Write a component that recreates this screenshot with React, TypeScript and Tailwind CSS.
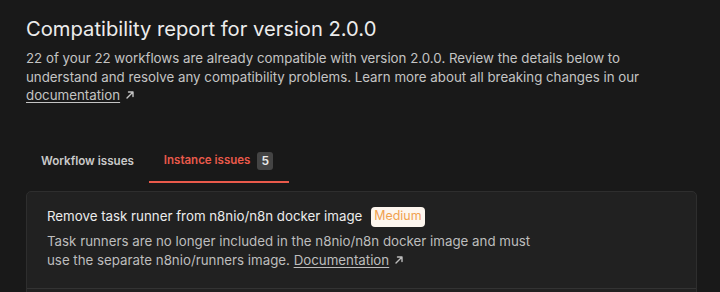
import React from 'react'

const ArrowUpRight = () => (
  <svg width="10" height="10" viewBox="0 0 10 10" fill="none" className="inline-block ml-[5px] align-[0px]">
    <path d="M2 8L8 2M3.5 2H8V6.5" stroke="currentColor" strokeWidth="1.4" strokeLinecap="round" strokeLinejoin="round" />
  </svg>
)

const App = () => {
  return (
    <div className="w-[720px] h-[292px] overflow-hidden bg-[#191919] font-['Inter',sans-serif]">
      <div className="pl-[26px] pr-[24px] pt-[15px]">
        <h1 className="text-[20.2px] leading-[28px] text-[#ececec]">
          Compatibility report for version 2.0.0
        </h1>
        <p className="mt-[6px] text-[13.3px] leading-[18.5px] text-[#c4c4c4] max-w-[640px]">
          22 of your 22 workflows are already compatible with version 2.0.0. Review the details below to
          understand and resolve any compatibility problems. Learn more about all breaking changes in our{' '}
          <a className="underline underline-offset-2 text-[#c4c4c4]">documentation</a>
          <ArrowUpRight />
        </p>

        {/* Tabs */}
        <div className="mt-[37px] flex items-end">
          <div className="px-[15px] h-[41px] flex items-center text-[11.6px] font-semibold text-[#c9c9c9]">
            Workflow issues
          </div>
          <div className="pl-[15px] pr-[16px] h-[41px] flex items-center gap-[7px] text-[11.5px] font-semibold text-[#ea5a4b] border-b-2 border-[#ea5a4b]">
            Instance issues
            <span className="w-[16px] h-[18px] rounded-[3px] bg-[#444] text-[#eaeaea] text-[12px] flex items-center justify-center">
              5
            </span>
          </div>
        </div>

        {/* Card */}
        <div className="mt-[8px] w-[671px] rounded-[5px] border border-[#2e2e2e] bg-[#212121]">
          <div className="px-[20px] pt-[15px] pb-[18px] border-b border-[#333]">
            <div className="flex items-center gap-[9px]">
              <span className="text-[13.3px] text-[#ececec]">Remove task runner from n8nio/n8n docker image</span>
              <span className="h-[20px] px-[3px] rounded-[4px] bg-[#fdf6ee] text-[#f0a14e] text-[12.4px] flex items-center">
                Medium
              </span>
            </div>
            <p className="mt-[5px] text-[13.3px] leading-[19px] text-[#bdbdbd] max-w-[500px]">
              Task runners are no longer included in the n8nio/n8n docker image and must use the separate
              n8nio/runners image.{' '}
              <a className="underline underline-offset-2">Documentation</a>
              <ArrowUpRight />
            </p>
          </div>
          <div className="h-[40px]" />
        </div>
      </div>
    </div>
  )
}

export default App
